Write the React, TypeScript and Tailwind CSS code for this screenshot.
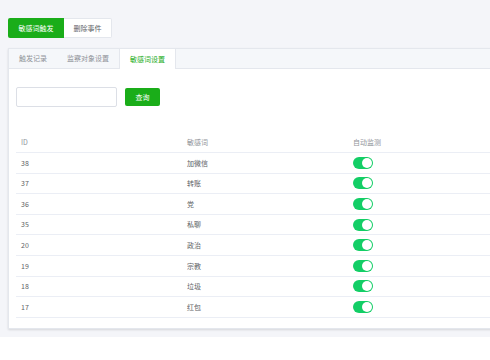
const rows = [
  { id: 38, word: "加微信" },
  { id: 37, word: "转账" },
  { id: 36, word: "党" },
  { id: 35, word: "私聊" },
  { id: 20, word: "政治" },
  { id: 19, word: "宗教" },
  { id: 18, word: "垃圾" },
  { id: 17, word: "红包" },
]

function Toggle() {
  return (
    <span className="relative inline-block h-[12px] w-[20px] rounded-full bg-[#13ce66]">
      <span className="absolute right-[1px] top-[1px] h-[10px] w-[10px] rounded-full bg-white" />
    </span>
  )
}

export default function App() {
  return (
    <div
      className="h-[360px] w-[490px] overflow-hidden bg-white text-[7px] text-[#606266]"
      style={{ fontFamily: '"Noto Sans CJK SC", "Noto Sans", sans-serif' }}
    >
      <div className="h-[337px] bg-[#f4f5f9] pl-[8px] pt-[18px]">
        {/* top buttons */}
        <div className="flex">
          <button className="flex h-[20px] w-[56px] items-center justify-center rounded-l-[2px] bg-[#1aad19] text-white">
            敏感词触发
          </button>
          <button className="flex h-[20px] w-[48px] items-center justify-center rounded-r-[2px] border border-l-0 border-[#e4e7ed] bg-white text-[#606266]">
            删除事件
          </button>
        </div>

        {/* card */}
        <div className="mt-[10px] w-[520px] border border-[#e4e7ed] bg-white shadow-[0_1px_2px_rgba(0,0,0,0.12)]">
          {/* tabs */}
          <div className="flex h-[20px] border-b border-[#e4e7ed] bg-[#f5f7fa]">
            <div className="flex items-center px-[10px] text-[#909399]">触发记录</div>
            <div className="flex items-center px-[10px] text-[#909399]">监察对象设置</div>
            <div className="-mb-px flex items-center border-x border-[#e4e7ed] bg-white px-[10px] text-[#1aad19]">
              敏感词设置
            </div>
          </div>

          <div className="px-[7px] pb-[10px]">
            {/* search */}
            <div className="mt-[18px] flex items-center gap-[8px]">
              <div className="h-[20px] w-[101px] rounded-[2px] border border-[#dcdfe6] bg-white" />
              <button className="flex h-[18px] w-[35px] items-center justify-center rounded-[2px] bg-[#1aad19] text-white">
                查询
              </button>
            </div>

            {/* table */}
            <div className="mt-[26px] w-[498px]">
              <div className="grid h-[20px] grid-cols-3 items-center border-b border-[#ebeef5] text-[#909399]">
                <div className="pl-[5px]">ID</div>
                <div className="pl-[5px]">敏感词</div>
                <div className="pl-[5px]">自动监测</div>
              </div>
              {rows.map((r) => (
                <div
                  key={r.id}
                  className="grid h-[20.6px] grid-cols-3 items-center border-b border-[#ebeef5]"
                >
                  <div className="pl-[5px]">{r.id}</div>
                  <div className="pl-[5px]">{r.word}</div>
                  <div className="flex pl-[5px]">
                    <Toggle />
                  </div>
                </div>
              ))}
            </div>
          </div>
        </div>
      </div>
    </div>
  )
}
